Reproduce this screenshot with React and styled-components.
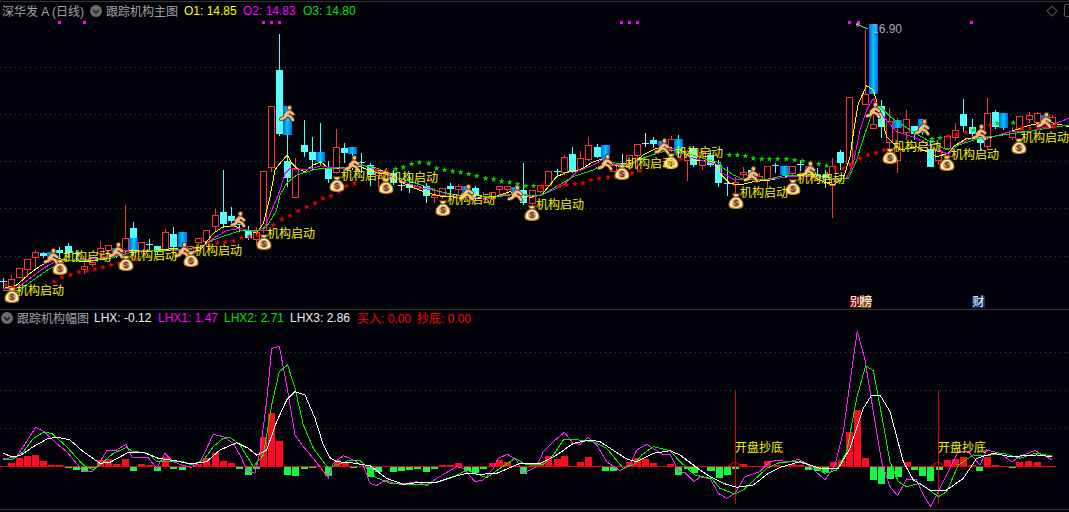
import React from 'react';
import styled, { createGlobalStyle } from 'styled-components';

const GlobalStyle = createGlobalStyle`
  html, body {
    margin: 0;
    padding: 0;
    background: #02020a;
  }
`

const Page = styled.div`
  width: 1069px;
  height: 512px;
  overflow: hidden;
  background: #02020a;
  font-family: 'Liberation Sans', 'Noto Sans CJK SC', sans-serif;
  font-size: 12px;
`

const Pane = styled.section`
  border-top: 1px solid ${props => props.$line};
  margin-top: ${props => props.$top}px;
  display: flex;
  flex-direction: column;
`

const PaneHeader = styled.header`
  box-sizing: border-box;
  height: ${props => props.$height}px;
  display: flex;
  align-items: center;
  white-space: nowrap;
  padding: 0 0 ${props => props.$lift}px ${props => props.$pad}px;
`

const Title = styled.span`
  color: #a3a3a3;
  width: ${props => props.$width}px;
  flex: none;
`

const Toggle = styled.svg`
  width: 12px;
  height: 12px;
  flex: none;
  margin-right: ${props => props.$after}px;
`

const Legend = styled.span`
  color: ${props => props.color};
  width: ${props => props.$width}px;
  flex: none;
`

const Corner = styled.div`
  margin-left: auto;
  display: flex;
  align-items: center;
  gap: 8px;
  margin-right: -6px;
`

const Diamond = styled.i`
  width: 6px;
  height: 6px;
  border: 1px solid #555;
  transform: rotate(45deg);
`

const CornerBox = styled.i`
  width: 9px;
  height: 11px;
  border: 1px solid #555;
  border-radius: 2px;
`

const ChartWrap = styled.div`
  position: relative;
  height: ${props => props.$height}px;
`

const ChartSvg = styled.svg`
  display: block;
  width: 1069px;
  height: ${props => props.$height}px;
`

const Badge = styled.span`
  position: absolute;
  bottom: 1px;
  left: ${props => props.$left}px;
  width: ${props => props.$width}px;
  height: 12px;
  line-height: 12px;
  text-align: center;
  white-space: nowrap;
  color: #fff;
  background: ${props => props.$bg};
  font-size: 12px;
  letter-spacing: ${props => props.$squeeze || 0}px;
`

const Tag = styled.text`
  fill: #f4f400;
  font-family: 'Noto Sans CJK SC', sans-serif;
  font-size: 12px;
  dominant-baseline: central;
`

const PeakValue = styled.text`
  fill: #a8a8a8;
  font-family: 'Liberation Sans', sans-serif;
  font-size: 12px;
  dominant-baseline: central;
`

const RED = '#ff3232'
const CYAN = '#54ffff'
const YELLOW = '#ffff00'
const MAGENTA = '#ff00ff'
const GREEN = '#00e600'
const WHITE = '#ffffff'
const BG = '#02020a'

// x, kind, high, body top, body bottom, low
const candles = [
  [3,'X',278,281,283,288],[11,'R',275,279,286,293],[19,'R',268,268,277,277],[27,'R',259,259,269,277],
  [35,'R',250,252,257,270],[43,'C',252,253,256,258],[51,'B',252,252,258,260],[59,'C',247,250,253,258],
  [68,'C',243,246,253,258],[76,'X',250,253,254,262],[84,'R',262,266,269,274],[92,'R',260,262,264,267],
  [100,'R',241,248,253,260],[108,'R',245,245,250,255],[116,'B',246,248,256,258],[125,'R',205,238,250,255],
  [133,'C',222,228,238,255],[133,'B',238,238,253,253],[141,'R',242,242,250,254],[149,'X',239,244,245,250],
  [157,'C',246,246,252,255],[165,'R',229,232,249,252],[173,'C',227,234,247,250],[182,'B',232,232,247,249],
  [190,'R',246,246,252,256],[198,'R',238,238,242,250],[206,'R',230,230,241,247],[215,'R',209,215,226,232],
  [223,'C',170,212,224,228],[231,'C',207,216,221,225],[239,'X',222,224,225,232],[248,'C',226,230,238,240],
  [256,'R',227,232,239,245],[263,'R',171,171,230,233],[271,'R',106,106,167,172],[279,'C',34,70,134,136],
  [287,'C',135,161,178,187],[287,'B',106,106,135,135],[295,'R',158,168,197,197],[304,'C',120,145,152,157],
  [312,'C',137,152,160,170],[320,'C',123,152,162,165],[320,'B',152,152,162,162],[328,'C',161,168,179,183],
  [336,'R',129,147,172,174],[344,'C',143,148,153,163],[352,'B',147,147,154,170],[361,'X',153,162,163,173],
  [370,'C',163,165,175,186],[378,'R',170,172,175,187],[386,'R',168,172,178,185],[393,'C',170,173,183,185],
  [401,'W',180,185,186,191],[409,'C',173,184,188,193],[417,'R',183,186,188,190],[426,'C',183,186,196,203],
  [434,'R',188,195,197,203],[442,'R',188,188,195,199],[450,'C',183,186,189,195],[458,'R',184,186,189,195],
  [466,'B',186,186,194,196],[475,'C',186,188,196,200],[483,'R',192,196,198,200],[492,'R',192,192,198,200],
  [499,'R',186,186,189,197],[507,'R',186,186,189,195],[515,'B',185,187,193,195],[523,'C',163,190,203,205],
  [532,'R',190,190,203,205],[540,'R',185,185,191,193],[548,'R',171,171,185,187],[557,'X',169,171,172,177],
  [564,'R',155,157,172,175],[572,'C',147,154,172,173],[580,'R',151,158,169,170],[588,'R',137,145,159,161],
  [597,'C',144,147,157,158],[605,'B',145,145,160,162],[613,'R',163,165,171,171],[622,'W',154,163,164,170],
  [629,'R',155,155,167,170],[637,'R',144,144,155,172],[645,'W',133,143,144,147],[653,'C',137,140,144,148],
  [662,'B',139,141,146,150],[671,'R',136,139,148,152],[678,'C',135,139,153,157],[678,'B',139,139,153,153],
  [687,'R',150,151,160,181],[693,'C',146,148,165,167],[702,'R',150,152,165,170],[710,'C',150,155,165,167],
  [718,'C',160,165,183,187],[727,'X',167,183,184,196],[735,'R',177,182,184,195],[743,'R',167,172,174,178],
  [751,'C',168,170,176,180],[759,'R',173,176,180,182],[767,'R',166,166,179,188],[775,'X',163,165,169,173],
  [784,'B',166,166,175,175],[792,'R',166,166,173,175],[800,'X',160,164,165,171],[809,'B',165,166,172,174],
  [817,'C',168,175,178,180],[825,'C',170,175,178,188],[832,'R',158,166,185,218],[840,'C',150,152,163,170],
  [849,'R',97,97,163,166],[865,'R',30,94,104,104],[873,'B',24,24,94,94],[873,'R',115,124,128,128],
  [881,'C',100,106,127,138],[889,'R',108,121,142,150],[897,'R',118,147,160,173],[897,'B',120,120,128,128],
  [906,'R',110,119,132,140],[914,'C',126,126,134,140],[922,'B',119,119,133,135],[930,'C',140,149,167,167],
  [938,'R',145,150,160,165],[947,'R',136,136,148,150],[955,'R',123,130,137,140],[963,'C',99,114,126,132],
  [972,'C',119,127,134,140],[980,'C',125,135,143,150],[987,'R',98,113,146,150],[995,'C',110,112,127,129],
  [1003,'B',113,113,128,130],[1012,'R',127,131,137,140],[1019,'R',116,116,129,130],[1029,'R',112,115,119,123],
  [1037,'R',112,113,122,125],[1045,'B',113,115,123,125],[1052,'R',115,117,124,128],
]

// points below are read off 3x crops, so [origin x, origin y, pairs]
const crop = (ox, oy, pairs) => {
  const out = []
  for (let i = 0; i < pairs.length; i += 2) out.push([ox + pairs[i] / 3, oy + pairs[i + 1] / 3])
  return out
}
const toPoints = list => list.map(p => p.join(',')).join(' ')

const mainLines = [
  [YELLOW, [
    ...crop(0,170,[10,355,50,345,90,310,125,285,170,265,200,270,260,275,330,265,360,250,400,240,470,240,530,235,560,248,600,240,640,190,670,170,700,168,740,180,770,190,790,160,810,80,825,0]),
    ...crop(280,100,[0,190,22,165,35,190,50,205,75,215,100,195,122,185,145,205,190,205,240,200,280,215,330,225]),
    ...crop(360,120,[100,170,140,195,190,215,240,228,290,232,340,230,380,238,420,225,450,215,480,225,510,232,545,225,590,170,620,157,660,150,700,125,725,118,750,130,780,140,810,138,850,105,890,85,930,82,970,95,1000,120,1060,125,1080,150]),
    ...crop(710,130,[30,130,60,160,90,165,130,155,180,150,230,140,290,130,340,155,370,165,400,145,420,80]),
    ...crop(710,0,[430,400,445,310,470,257,490,270,510,340,530,410,570,450,620,440,680,470,715,460,730,440,770,415,830,415,870,405,950,378,1010,365,1077,380]),
  ]],
  [MAGENTA, [
    ...crop(0,170,[10,355,50,355,90,325,130,295,170,272,230,270,330,262,380,245,470,240,540,240,600,235,640,205,680,182,720,175,760,185,790,180,820,110,840,60]),
    ...crop(280,100,[15,220,30,205,60,210,100,205,122,197,150,203,200,205,240,192,280,205,330,225]),
    ...crop(360,120,[80,165,130,185,190,205,240,215,290,232,340,232,380,238,430,225,470,220,520,232,570,215,610,195,650,155,700,135,730,118,760,132,810,135,850,115,900,95,940,85,990,112,1040,125,1080,135]),
    ...crop(710,130,[30,125,70,148,110,150,180,148,240,140,300,138,360,150,410,145,430,100]),
    ...crop(710,0,[450,390,470,330,490,295,520,350,560,395,620,415,680,450,715,462,750,430,800,410,850,410,900,395,960,395,1010,380,1077,355]),
  ]],
  [GREEN, [
    ...crop(0,170,[10,360,60,360,100,330,150,295,200,272,270,272,340,262,400,245,510,240,600,232,640,210,680,195,720,182,770,183,800,170,830,120]),
    ...crop(280,100,[0,285,20,250,50,225,100,210,122,205,160,205,240,197,280,200,330,222]),
    ...crop(360,120,[100,170,170,190,240,215,290,225,340,225,400,232,470,222,540,228,580,205,640,170,700,150,740,125,800,135,860,110,910,95,950,90,1000,105,1050,122,1080,128]),
    ...crop(710,130,[30,108,70,135,100,148,160,150,230,135,300,135,360,145,415,145,440,90]),
    ...crop(710,0,[465,400,490,330,510,320,540,350,600,390,660,425,710,450,760,430,810,415,880,405,950,395,1010,385,1077,375]),
  ]],
]

const redStars = [
  ...crop(0,170,[18,345,40,352,162,335,186,322,212,315,237,306,261,302,285,298,309,292,333,285,357,280,408,268,628,222,652,218,676,215,700,212,724,203,748,200,772,195,820,165,846,148,870,137,894,123,920,111,945,100,969,85,993,78,1017,65,1040,48,1064,40]),
  ...crop(360,120,[50,152,80,155,545,200,597,198,620,195,645,192,669,190,693,180,717,175,744,172,768,170,816,160,840,152,962,116]),
  ...crop(710,130,[375,113,399,115,425,105,450,85,474,75,498,68,522,60]),
  ...crop(710,0,[715,408,740,403,768,397,840,375,936,382,960,385,985,383,1010,380,1034,380]),
]

const greenStars = [
  ...crop(360,120,[107,147,130,142,155,132,178,127,206,130,230,145,254,150,278,154,302,157,326,162,350,168,377,175,401,178,425,184,449,187,473,192,497,198,521,198]),
  ...crop(710,130,[58,75,82,75,106,78,130,85,155,87,178,87,203,87,229,87,254,90,278,93,302,98,326,102,350,107]),
  ...crop(710,0,[666,417,690,414,790,390,862,370,910,368]),
]

const markers = [58,83,262,270,278,620,628,636,848,857,970]

const tags = [
  [16,289],[63,255],[129,254],[194,249],[267,232],[341,174],[390,176],[447,198],[536,203],
  [626,162],[675,151],[740,191],[797,177],[893,145],[951,153],[1021,136],
]

const runners = [
  [52,256],[117,250],[183,250],[239,219],[288,113],[353,163],[467,192],[516,193],[606,162],
  [663,146],[752,174],[809,169],[874,110],[923,127],[980,132],[1045,120],
]

const bags = [
  [12,295],[60,267],[126,263],[191,259],[264,242],[337,184],[386,186],[443,208],[532,213],
  [622,172],[671,161],[736,201],[793,187],[890,156],[947,163],[1019,146],
]

const subLines = [
  ['#ff20ff', [
    ...crop(0,305,[10,462,50,455,70,425,107,367,130,378,175,420,200,440,225,470,250,500,278,500,300,470,322,435,345,438,378,418,397,458,445,458,470,490,495,445,520,470,545,480,575,487,600,470,620,430,640,388,670,395,700,415,725,460,740,495,765,505,780,440,800,290,815,130,838,124,860,240,885,390,910,425,940,460,985,518,1000,475,1030,452,1060,465]),
    ...crop(360,305,[0,478,10,482,30,535,50,542,75,525,100,535,125,538,170,530,200,542,230,520,290,485,310,490,345,530,370,525,400,490,415,460,442,448,470,465,490,505,530,485,550,440,580,410,613,382,640,415,660,418,685,397,710,420,740,470,780,497,810,480,830,435,860,418,880,430,905,447,930,448,955,498,975,503,1003,530,1020,515,1050,522]),
    ...crop(710,305,[0,520,25,565,50,580,75,565,105,515,150,500,180,470,200,466,240,470,265,463,290,475,345,525,375,480,400,380,420,230,442,78,465,165,490,320,515,470,540,545,563,572,590,522,620,525,640,570,662,605,685,560,720,490,745,440,775,440,810,480,830,435,870,445,905,470,940,450,975,437,1025,464]),
  ]],
  ['#00f000', [
    ...crop(0,305,[10,462,40,462,70,440,100,400,130,382,155,385,200,425,250,480,280,495,300,480,340,445,378,428,397,438,445,445,470,470,500,468,545,468,575,480,610,465,640,425,670,400,690,397,720,420,760,485,790,450,815,300,838,200,863,180,885,250,910,360,940,430,985,490,1010,480,1050,465]),
    ...crop(360,305,[0,467,15,480,30,510,90,535,130,537,200,538,270,520,320,495,380,518,420,490,465,460,500,480,550,478,580,450,610,405,640,403,700,410,740,430,790,490,820,480,845,450,880,425,930,437,960,470,1005,510,1050,520]),
    ...crop(710,305,[0,515,30,550,75,567,100,555,170,490,210,472,260,470,300,480,345,505,380,495,410,440,440,280,467,182,490,197,515,330,540,470,565,530,590,545,630,535,685,575,710,560,745,480,790,450,830,452,880,445,930,460,975,445,1025,452]),
  ]],
  [WHITE, [
    ...crop(0,305,[10,445,35,455,60,452,100,425,145,400,175,397,210,405,250,440,300,475,330,472,385,442,430,442,475,460,530,468,570,477,620,470,660,435,710,413,745,430,770,450,800,435,830,350,860,285,885,260,915,270,945,340,970,420,990,458,1010,470,1070,475]),
    ...crop(360,305,[0,478,30,482,80,520,130,538,170,533,230,532,280,515,320,505,360,508,410,505,480,475,540,475,590,450,640,415,690,405,720,410,800,462,830,470,880,445,930,437,960,450,1020,495,1050,515]),
    ...crop(710,305,[0,515,40,535,80,547,130,540,175,505,210,487,270,470,330,490,385,490,420,430,460,310,485,270,510,270,540,320,580,470,610,525,660,555,710,555,760,520,800,460,850,445,900,455,980,450,1025,455]),
  ]],
]

const bars = [
  ...crop(0,305,[34,473,58,458,82,453,106,450,130,468,154,480,178,480,205,488,229,495,253,500,277,490,301,465,325,462,349,477,376,462,400,498,424,477,448,480,472,498,496,457,520,491,547,495,595,478,619,460,644,444,668,468,692,474,716,491,743,510,767,492,790,396,814,324,838,408,862,510,886,513,913,491,937,488,985,513,1010,464,1034,473,1058,488]),
  ...crop(360,305,[30,515,54,500,100,500,124,498,148,495,172,492,198,500,223,491,247,481,271,481,295,474,320,498,344,505,370,491,395,474,418,465,442,470,490,506,515,480,540,472,565,453,590,462,613,453,661,470,685,456,736,497,760,497,808,470,832,460,856,462,880,474,905,487,930,477,955,510,980,491,1003,503,1050,497]),
  ...crop(710,305,[3,497,26,518,52,510,76,491,100,477,172,468,197,480,245,477,270,480,295,495,320,498,344,502,368,471,392,465,417,380,442,315,466,459,490,525,514,537,539,522,563,516,590,471,613,495,637,513,661,527,686,495,710,465,734,461,760,456,785,480,808,498,832,456,856,480,905,488,928,471,955,468,980,471,1004,487]),
]

const ZERO = 466.5

const Candle = ({ x, kind, high, top, bottom, low }) => {
  const cx = Math.round(x) + 0.5
  if (kind === 'X' || kind === 'W') {
    const color = kind === 'X' ? CYAN : '#d8d8d8'
    return (
      <g stroke={color} shapeRendering="crispEdges">
        <line x1={cx} y1={high} x2={cx} y2={low} />
        <line x1={cx - 3.5} y1={top + 0.5} x2={cx + 3.5} y2={top + 0.5} />
      </g>
    )
  }
  const color = kind === 'R' ? RED : CYAN
  return (
    <g shapeRendering="crispEdges">
      {high < top && <line x1={cx} y1={high} x2={cx} y2={top} stroke={color} />}
      {low > bottom && <line x1={cx} y1={bottom} x2={cx} y2={low} stroke={color} />}
      {kind === 'R' && (
        <>
          <rect x={cx - 3.5} y={top} width={7} height={bottom - top + 1} fill={RED} />
          <rect x={cx - 2.5} y={top + 1} width={5} height={bottom - top - 1} fill={BG} />
        </>
      )}
      {kind === 'C' && <rect x={cx - 3.5} y={top} width={7} height={bottom - top} fill={CYAN} />}
      {kind === 'B' && <rect x={cx - 4.5} y={top} width={9} height={bottom - top} fill="url(#blueBody)" />}
    </g>
  )
}

const Defs = () => (
  <defs>
    <linearGradient id="blueBody" x1="0" x2="1" y1="0" y2="0">
      <stop offset="0" stopColor="#0062e6" />
      <stop offset="0.5" stopColor="#00c8ff" />
      <stop offset="1" stopColor="#0062e6" />
    </linearGradient>
    <polygon id="star" points="0,-3 0.8,-1 3,-1 1.2,0.4 1.9,2.6 0,1.3 -1.9,2.6 -1.2,0.4 -3,-1 -0.8,-1" />
    <g id="runner" fill="none" strokeLinecap="round" strokeLinejoin="round">
      <path d="M1 -2 L-1 2 M1 -2 L5 1 M1 -2 L-3 2 M-1 2 L3 4 L5 7 M-1 2 L-4 5 L-7 6" stroke="#5a3212" strokeWidth="4" />
      <path d="M1 -2 L-1 2 M1 -2 L5 1 M1 -2 L-3 2 M-1 2 L3 4 L5 7 M-1 2 L-4 5 L-7 6" stroke="#f6ba80" strokeWidth="2.5" />
      <circle cx="1.5" cy="-5.2" r="2.4" fill="#f6ba80" stroke="#5a3212" />
    </g>
    <g id="bag">
      <path d="M-3 -7 L3 -7 L1.6 -4 C5 -2 7 1 7 3.5 C7 6.6 4 7.5 0 7.5 C-4 7.5 -7 6.6 -7 3.5 C-7 1 -5 -2 -1.6 -4 Z"
        fill="#fff0b8" stroke="#b57a1c" strokeWidth="1.2" />
      <path d="M-2.2 -4 L2.2 -4" stroke="#7a4a10" strokeWidth="1.2" />
      <circle cx="0" cy="2" r="4" fill="#d8a878" />
      <text x="0" y="5" textAnchor="middle" fontSize="9" fontWeight="700" fontFamily="Liberation Sans, sans-serif" fill="#6e2a1a">$</text>
    </g>
  </defs>
)

const Grid = ({ rows }) => rows.map(y => (
  <line key={y} x1="0" x2="1069" y1={y + 0.5} y2={y + 0.5} stroke="#444" strokeDasharray="1 4" shapeRendering="crispEdges" />
))

const PriceChart = () => (
  <ChartSvg $height={288} viewBox="0 21 1069 288">
    <Defs />
    <Grid rows={[67, 114, 161, 208, 256]} />
    {markers.map(x => <rect key={x} x={x} y={21} width={3} height={3} fill={MAGENTA} />)}
    {candles.map(([x, kind, high, top, bottom, low], i) => (
      <Candle key={i} x={x} kind={kind} high={high} top={top} bottom={bottom} low={low} />
    ))}
    {mainLines.map(([color, pts]) => (
      <polyline key={color} points={toPoints(pts)} fill="none" stroke={color} shapeRendering="crispEdges" />
    ))}
    {redStars.map(([x, y], i) => <use key={i} href="#star" x={x} y={y} fill="#e80000" />)}
    {greenStars.map(([x, y], i) => <use key={i} href="#star" x={x} y={y} fill="#00d800" />)}
    {runners.map(([x, y]) => <use key={x} href="#runner" x={x} y={y} />)}
    {bags.map(([x, y]) => <use key={x} href="#bag" x={x} y={y} />)}
    {tags.map(([x, y]) => <Tag key={x} x={x} y={y}>机构启动</Tag>)}
    <path d="M868 29 L856 24 M856 24 L860 24 M856 24 L858 27" stroke="#c0c0c0" fill="none" />
    <PeakValue x={872} y={29}>16.90</PeakValue>
  </ChartSvg>
)

const RangeChart = () => (
  <ChartSvg $height={183} viewBox="0 326 1069 183">
    <Grid rows={[352, 390, 428]} />
    {bars.map(([x, y], i) => (
      <rect key={i} x={Math.round(x) - 3} y={Math.min(y, ZERO)} width={7} height={Math.abs(y - ZERO)}
        fill={y < ZERO ? '#ff0a20' : '#10f848'} shapeRendering="crispEdges" />
    ))}
    <line x1="0" x2="1056" y1={ZERO} y2={ZERO} stroke="#f00000" shapeRendering="crispEdges" />
    {[735, 938].map(x => (
      <g key={x} stroke="#e00000" fill="none" shapeRendering="crispEdges">
        <line x1={x + 0.5} x2={x + 0.5} y1="390" y2="504" />
        <polyline points={`${x - 7},466 ${x},462 ${x + 7},466`} />
      </g>
    ))}
    {subLines.map(([color, pts]) => (
      <polyline key={color} points={toPoints(pts)} fill="none" stroke={color} shapeRendering="crispEdges" />
    ))}
    <Tag x={735} y={446}>开盘抄底</Tag>
    <Tag x={938} y={446}>开盘抄底</Tag>
  </ChartSvg>
)

const ChevronDot = ({ after }) => (
  <Toggle $after={after} viewBox="0 0 12 12">
    <circle cx="6" cy="6" r="6" fill="#6b6b6b" />
    <path d="M3 5 L6 8 L9 5" fill="none" stroke="#1c1c1c" strokeWidth="1.5" />
  </Toggle>
)

const App = () => {
  return (
    <Page>
      <GlobalStyle />
      <Pane $top={1} $line="#333">
        <PaneHeader $height={19} $pad={2} $lift={2}>
          <Title $width={88}>深华发 A (日线)</Title>
          <ChevronDot after={4} />
          <Title $width={78}>跟踪机构主图</Title>
          <Legend color={YELLOW} $width={59}>O1: 14.85</Legend>
          <Legend color={MAGENTA} $width={60}>O2: 14.83</Legend>
          <Legend color={GREEN} $width={60}>O3: 14.80</Legend>
          <Corner>
            <Diamond />
            <CornerBox />
          </Corner>
        </PaneHeader>
        <ChartWrap $height={288}>
          <PriceChart />
          <Badge $left={850} $width={21} $squeeze={-1.5} $bg="linear-gradient(90deg, #7a0000 50%, #8a4a00 50%)">别榜</Badge>
          <Badge $left={972} $width={13} $bg="#0a3468">财</Badge>
        </ChartWrap>
      </Pane>
      <Pane $top={0} $line="#333">
        <PaneHeader $height={16} $pad={1} $lift={1}>
          <ChevronDot after={4} />
          <Title $width={77}>跟踪机构幅图</Title>
          <Legend color="#f0f0f0" $width={64}>LHX: -0.12</Legend>
          <Legend color={MAGENTA} $width={66}>LHX1: 1.47</Legend>
          <Legend color={GREEN} $width={66}>LHX2: 2.71</Legend>
          <Legend color="#f0f0f0" $width={67}>LHX3: 2.86</Legend>
          <Legend color="#ff0000" $width={60}>买入: 0.00</Legend>
          <Legend color="#ff0000" $width={60}>抄底: 0.00</Legend>
        </PaneHeader>
        <ChartWrap $height={183}>
          <RangeChart />
        </ChartWrap>
      </Pane>
      <Pane $top={0} $line="#333" />
    </Page>
  )
}

export default App;
